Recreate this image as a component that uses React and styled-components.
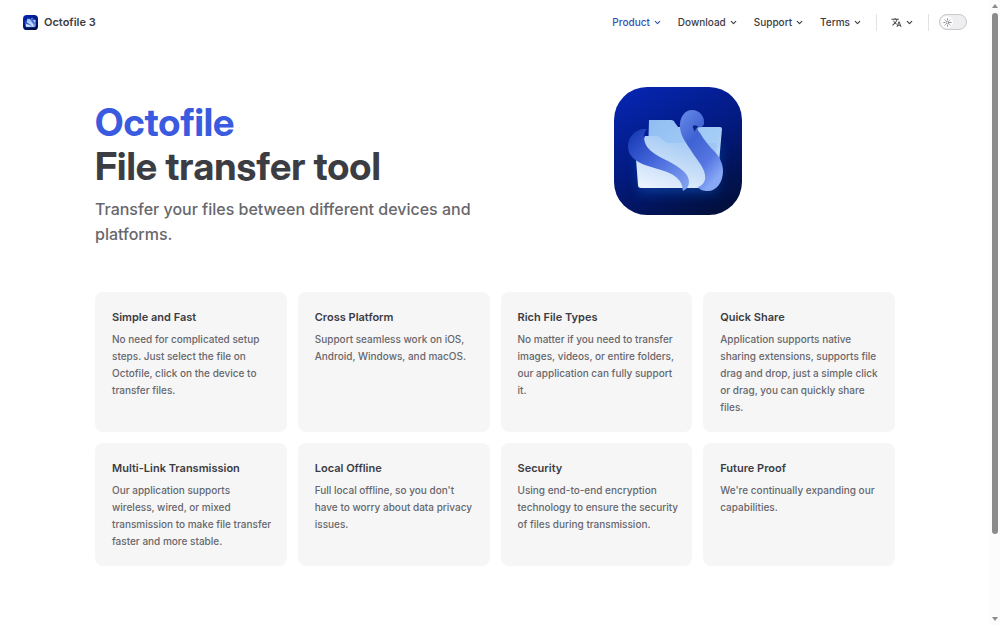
import React from "react";
import styled, { createGlobalStyle } from "styled-components";
import { ChevronDown, Sun } from "lucide-react";
import { MdTranslate } from "react-icons/md";

const GlobalStyle = createGlobalStyle`
  *, *::before, *::after { box-sizing: border-box; }
  body {
    margin: 0;
    background: #fff;
    color: #3c3c43;
    font-family: Inter, "Liberation Sans", sans-serif;
    font-size: 10px;
    font-weight: 500;
  }
  h1, h2, p { margin: 0; }
`;

const Shell = styled.div`
  display: flex;
  align-items: flex-start;
  min-height: 100vh;
`;

const Page = styled.div`
  flex: 1;
  min-width: 0;
`;

const Header = styled.header`
  display: flex;
  align-items: center;
  justify-content: space-between;
  height: 44px;
  padding: 0 23px;
`;

const Brand = styled.a`
  display: flex;
  align-items: center;
  gap: 6px;
  color: #3c3c43;
  font-size: 11px;
  font-weight: 600;
  line-height: 16px;
  text-decoration: none;
`;

const Nav = styled.nav`
  display: flex;
  align-items: center;
`;

const Menu = styled.div`
  display: flex;
  align-items: center;
  gap: 16px;
`;

const MenuButton = styled.button`
  display: flex;
  align-items: center;
  gap: 3px;
  padding: 0;
  border: 0;
  background: none;
  color: ${({ $active }) => ($active ? "#3451b2" : "#3c3c43")};
  font: inherit;
  line-height: 16px;
  cursor: pointer;
`;

const Divider = styled.span`
  width: 1px;
  height: 17px;
  margin: 0 ${({ $right }) => $right}px 0 14px;
  background: #e2e2e3;
`;

const SwitchLabel = styled.label`
  display: flex;
`;

const Switch = styled.input`
  appearance: none;
  width: 28px;
  height: 16px;
  margin: 0;
  border: 1px solid #c9c9ce;
  border-radius: 8px;
  background: #eeeef1;
  cursor: pointer;
`;

const SwitchWrap = styled.span`
  position: relative;
  display: flex;
`;

const Thumb = styled.span`
  position: absolute;
  top: 2px;
  left: 2px;
  display: flex;
  align-items: center;
  justify-content: center;
  width: 12px;
  height: 12px;
  border-radius: 50%;
  background: #fff;
  color: #67676c;
  pointer-events: none;
`;

const Main = styled.main`
  max-width: 800px;
  margin: 0 auto;
  padding-bottom: 57px;
`;

const Hero = styled.section`
  display: grid;
  grid-template-columns: 400fr 366fr;
  align-items: start;
  padding: 43px 34px 45px 0;
`;

const HeroText = styled.div`
  padding-top: 13px;
`;

const HeroTitle = styled.h1`
  font-family: "Inter Display", Inter, "Liberation Sans", sans-serif;
  font-size: 38px;
  font-weight: 700;
  line-height: 44px;
`;

const HeroName = styled.span`
  display: block;
  color: #3a5ae0;
`;

const Tagline = styled.p`
  padding-top: 9px;
  color: #67676c;
  font-size: 16px;
  line-height: 25px;
`;

const HeroArt = styled.div`
  display: flex;
  justify-content: center;
`;

const Features = styled.section`
  display: grid;
  grid-template-columns: repeat(4, 1fr);
  gap: 11px;
`;

const Card = styled.article`
  padding: 17px 13px 16px 17px;
  border-radius: 8px;
  background: #f6f6f7;
`;

const CardTitle = styled.h2`
  font-size: 11px;
  font-weight: 600;
  line-height: 17px;
`;

const CardText = styled.p`
  padding-top: 5px;
  color: #67676c;
  line-height: 17px;
`;

const ScrollBar = styled.div`
  position: sticky;
  top: 0;
  display: flex;
  flex-direction: column;
  align-items: center;
  width: 10px;
  height: 100vh;
  padding: 4px 0;
  background: #fcfcfc;
`;

const ScrollTrack = styled.div`
  flex: 1;
  width: 6px;
  margin: 5px 0;
`;

const ScrollThumb = styled.div`
  height: 87%;
  border-radius: 3px;
  background: #8b8b8b;
`;

function Logo({ size, id }) {
  const u = (name) => `url(#${id}-${name})`;
  return (
    <svg width={size} height={size} viewBox="0 0 128 128" role="img" aria-label="Octofile logo">
      <defs>
        <linearGradient id={`${id}-bg`} x1="0.2" y1="0" x2="0.7" y2="1">
          <stop offset="0" stopColor="#0525ae" />
          <stop offset="0.5" stopColor="#031a80" />
          <stop offset="1" stopColor="#021040" />
        </linearGradient>
        <linearGradient id={`${id}-back`} x1="0" y1="0" x2="1" y2="1">
          <stop offset="0" stopColor="#8fbdf2" />
          <stop offset="0.6" stopColor="#a6cdf6" />
          <stop offset="1" stopColor="#d5eafb" />
        </linearGradient>
        <linearGradient id={`${id}-front`} x1="0.7" y1="0" x2="0.2" y2="1">
          <stop offset="0" stopColor="#9cc5f3" />
          <stop offset="1" stopColor="#eaf2fd" />
        </linearGradient>
        <linearGradient id={`${id}-left`} x1="0" y1="0" x2="1" y2="1">
          <stop offset="0" stopColor="#1233b0" />
          <stop offset="0.45" stopColor="#4466da" />
          <stop offset="1" stopColor="#88a7f3" />
        </linearGradient>
        <linearGradient id={`${id}-right`} x1="0" y1="0" x2="0.6" y2="1">
          <stop offset="0" stopColor="#688be9" />
          <stop offset="0.4" stopColor="#3f62d3" />
          <stop offset="0.75" stopColor="#5677e2" />
          <stop offset="1" stopColor="#88a8f6" />
        </linearGradient>
        <filter id={`${id}-glow`} x="-30%" y="-30%" width="160%" height="160%">
          <feGaussianBlur stdDeviation="6" />
        </filter>
      </defs>
      <rect width="128" height="128" rx="33" fill={u("bg")} />
      <path d="M24 60h83l-5 46H25z" fill="#075ac0" opacity="0.5" filter={u("glow")} />
      <path d="M35 33h22q3 0 4 3l3 4h42q2 0 2 2l-5 56q0 3-3 3H33z" fill={u("back")} />
      <path d="M31 49h12q3 0 5 3l5 4h50l-4 43q0 2-3 2H27q-3 0-3-3l-2-26z" fill={u("front")} />
      <path
        d="M29 42C20 43 14 51 14 59c0 10 7 15 17 19 12 4 28 7 34 15 4 5 3 8 4 11 4-2 6-5 6-9 0-9-10-15-21-21-14-7-24-12-24-25 0-3 1-5 3-7z"
        fill={u("left")}
      />
      <path
        d="M66 41c-1-11 5-18 12-18 8 0 13 7 12 14-1 3-4 4-6 3-1 2 0 4 2 6 4 7 10 14 15 19 6 7 8 13 8 19 0 12-7 20-15 20-5 0-8-1-10-4 5-2 8-6 7-12-1-8-8-15-13-23-5-8-11-15-12-24z"
        fill={u("right")}
      />
      <path d="M79 41c-1-4 3-3 6-1-2 0-4 2-4 5z" fill="#0b2387" />
    </svg>
  );
}

const menus = ["Product", "Download", "Support", "Terms"];

const features = [
  ["Simple and Fast", "No need for complicated setup steps. Just select the file on Octofile, click on the device to transfer files."],
  ["Cross Platform", "Support seamless work on iOS, Android, Windows, and macOS."],
  ["Rich File Types", "No matter if you need to transfer images, videos, or entire folders, our application can fully support it."],
  ["Quick Share", "Application supports native sharing extensions, supports file drag and drop, just a simple click or drag, you can quickly share files."],
  ["Multi-Link Transmission", "Our application supports wireless, wired, or mixed transmission to make file transfer faster and more stable."],
  ["Local Offline", "Full local offline, so you don't have to worry about data privacy issues."],
  ["Security", "Using end-to-end encryption technology to ensure the security of files during transmission."],
  ["Future Proof", "We're continually expanding our capabilities."],
];

export default function App() {
  return (
    <>
      <GlobalStyle />
      <Shell>
        <Page>
          <Header>
            <Brand href="#">
              <Logo size={15} id="brand" />
              Octofile 3
            </Brand>
            <Nav aria-label="Main">
              <Menu>
                {menus.map((name) => (
                  <MenuButton key={name} type="button" $active={name === "Product"}>
                    {name}
                    <ChevronDown size={9} strokeWidth={3} />
                  </MenuButton>
                ))}
              </Menu>
              <Divider $right={14} />
              <MenuButton type="button" aria-label="Change language">
                <MdTranslate size={11} />
                <ChevronDown size={9} strokeWidth={3} />
              </MenuButton>
              <Divider $right={10} />
              <SwitchLabel>
                <SwitchWrap>
                  <Switch type="checkbox" role="switch" aria-label="Dark theme" />
                  <Thumb>
                    <Sun size={9} strokeWidth={2} />
                  </Thumb>
                </SwitchWrap>
              </SwitchLabel>
            </Nav>
          </Header>
          <Main>
            <Hero>
              <HeroText>
                <HeroTitle>
                  <HeroName>Octofile</HeroName>
                  File transfer tool
                </HeroTitle>
                <Tagline>Transfer your files between different devices and platforms.</Tagline>
              </HeroText>
              <HeroArt>
                <Logo size={128} id="hero" />
              </HeroArt>
            </Hero>
            <Features>
              {features.map(([title, text]) => (
                <Card key={title}>
                  <CardTitle>{title}</CardTitle>
                  <CardText>{text}</CardText>
                </Card>
              ))}
            </Features>
          </Main>
        </Page>
        <ScrollBar aria-hidden="true">
          <svg width="6" height="4" viewBox="0 0 6 4"><path d="M3 0l3 4H0z" fill="#8b8b8b" /></svg>
          <ScrollTrack>
            <ScrollThumb />
          </ScrollTrack>
          <svg width="6" height="4" viewBox="0 0 6 4"><path d="M3 4L0 0h6z" fill="#8b8b8b" /></svg>
        </ScrollBar>
      </Shell>
    </>
  );
}
